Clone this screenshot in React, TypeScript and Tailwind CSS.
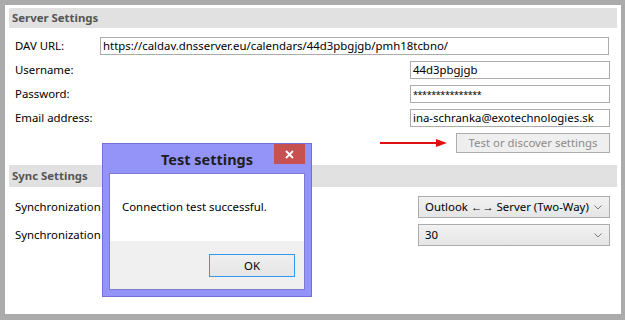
import React from "react";

const font = { fontFamily: '"Noto Sans", "Segoe UI", Arial, sans-serif' };

function Chevron() {
  return (
    <svg width="8" height="5" viewBox="0 0 8 5" className="shrink-0">
      <path d="M0.5 0.5 L4 4 L7.5 0.5" fill="none" stroke="#7a7a7a" strokeWidth="1" />
    </svg>
  );
}

function Field({ label, value, wide, top, small }: { label: string; value: string; wide?: boolean; top: string; small?: boolean }) {
  const txt = small ? "text-[9px] tracking-[-0.4px] pt-[1px]" : "text-[11.4px]";
  return (
    <div className={`flex items-center ${top}`}>
      <div className="w-[95px] pl-[10px] text-[11.4px] text-black whitespace-nowrap">{label}</div>
      {wide ? (
        <div className="w-[509px] h-[18px] border border-[#acacac] flex items-center px-[2px] text-[11.4px] text-black leading-none whitespace-nowrap">
          {value}
        </div>
      ) : (
        <div className={`ml-auto mr-[11px] w-[200px] h-[18px] border border-[#acacac] flex items-center px-[2px] ${txt} text-black leading-none whitespace-nowrap`}>
          {value}
        </div>
      )}
    </div>
  );
}

function Select({ value, top }: { value: string; top: string }) {
  return (
    <div className={`flex items-center ${top}`}>
      <div className="w-[100px] pl-[10px] text-[11.4px] text-black whitespace-nowrap">Synchronization</div>
      <div className="ml-auto mr-[11px] w-[192px] h-[22px] border border-[#acacac] bg-gradient-to-b from-[#f2f2f2] to-[#e5e5e5] flex items-center justify-between pl-[6px] pr-[7px] text-[11.4px] text-black whitespace-nowrap">
        <span>{value}</span>
        <Chevron />
      </div>
    </div>
  );
}

export default function App() {
  return (
    <div className="w-[625px] h-[320px] bg-[#ababab] pt-[5px] pl-[5px] pr-[4px] pb-[6px]" style={font}>
      <div className="relative w-full h-full bg-white flex flex-col">
        {/* Server settings header */}
        <div className="mt-[3px] mx-[4px] h-[20px] bg-[#e1e1e1] flex items-center pl-[3px] text-[11.4px] font-bold text-[#555555]">
          Server Settings
        </div>

        <Field label="DAV URL:" value="https://caldav.dnsserver.eu/calendars/44d3pbgjgb/pmh18tcbno/" wide top="mt-[9px]" />
        <Field label="Username:" value="44d3pbgjgb" top="mt-[6px]" />
        <Field label="Password:" value="***************" top="mt-[6px]" small />
        <Field label="Email address:" value="ina-schranka@exotechnologies.sk" top="mt-[6px]" />

        <div className="flex items-center justify-end mt-[6px] mr-[11px]">
          <svg width="68" height="10" viewBox="0 0 68 10" className="mr-[8px]">
            <line x1="0" y1="5" x2="58" y2="5" stroke="#e01010" strokeWidth="2" />
            <path d="M56 1 L67 5 L56 9 Z" fill="#e01010" />
          </svg>
          <div className="w-[154px] h-[20px] border border-[#adadad] bg-[#efefef] flex items-center justify-center text-[11.4px] text-[#8a8a8a] whitespace-nowrap">
            Test or discover settings
          </div>
        </div>

        {/* Sync settings header */}
        <div className="mt-[12px] mx-[4px] h-[22px] bg-[#e1e1e1] flex items-center pl-[3px] text-[11.4px] font-bold text-[#555555]">
          Sync Settings
        </div>

        <Select value="Outlook ←→ Server (Two-Way)" top="mt-[9px]" />
        <Select value="30" top="mt-[6px]" />

        {/* Dialog */}
        <div className="absolute left-[97px] top-[138px] w-[210px] h-[154px] border border-[#7171d2] bg-[#9494f8] flex flex-col">
          <div className="relative h-[29px] flex items-center justify-center">
            <span className="text-[14.5px] font-bold text-[#1e1e1e] mt-[2px]">Test settings</span>
            <div className="absolute top-0 right-[6px] w-[31px] h-[20px] bg-[#c75050] flex items-center justify-center">
              <svg width="9" height="9" viewBox="0 0 9 9">
                <path d="M1 1 L8 8 M8 1 L1 8" stroke="#ffffff" strokeWidth="1.8" />
              </svg>
            </div>
          </div>
          <div className="mx-[6px] mb-[6px] flex-1 border border-[#7b7bcf] flex flex-col">
            <div className="h-[67px] bg-white flex items-center pl-[12px] pb-[2px] text-[11.4px] text-black">
              Connection test successful.
            </div>
            <div className="flex-1 bg-[#f0f0f0] flex justify-end items-start pt-[13px] pr-[9px]">
              <div className="w-[86px] h-[23px] border border-[#3399ee] bg-gradient-to-b from-[#efefef] to-[#e5e5e5] flex items-center justify-center text-[11.4px] text-black">
                OK
              </div>
            </div>
          </div>
        </div>
      </div>
    </div>
  );
}
